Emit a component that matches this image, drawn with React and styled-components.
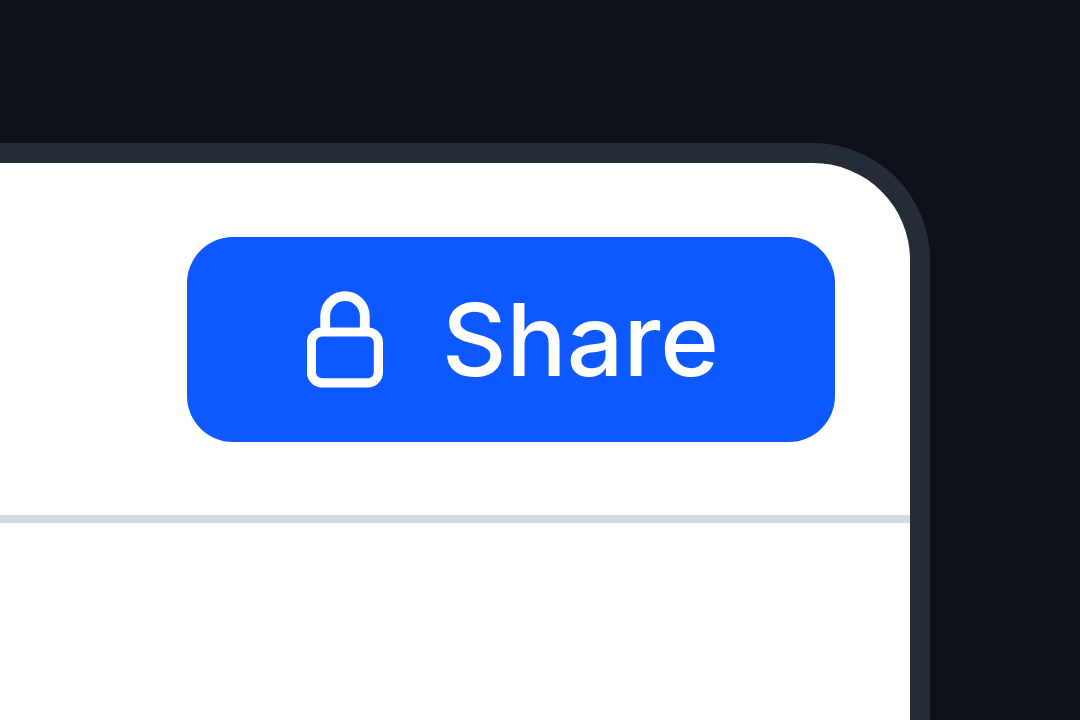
import React from 'react'
import styled, { createGlobalStyle } from 'styled-components'

const GlobalStyle = createGlobalStyle`
  * {
    box-sizing: border-box;
  }
  body {
    margin: 0;
    background: #0e1119;
  }
`

const Stage = styled.div`
  display: flex;
  min-height: 100vh;
  padding: 143px 150px 0 0;
  background: #0e1119;
  font-family: Inter, sans-serif;
`

const Panel = styled.main`
  flex: 1;
  border: solid #252c37;
  border-width: 20px 20px 0 0;
  border-top-right-radius: 117px;
  background: #fff;
  overflow: hidden;
`

const Toolbar = styled.header`
  display: flex;
  justify-content: flex-end;
  padding: 74px 75px 73px;
  border-bottom: 8px solid #d3dbe5;
`

const ShareButton = styled.button`
  display: flex;
  align-items: center;
  gap: 59px;
  height: 205px;
  padding: 0 116px 0 120px;
  border: 0;
  border-radius: 46px;
  background: #0e59ff;
  color: #fff;
  font-family: inherit;
  font-size: 100px;
  font-weight: 500;
  line-height: 120px;
  cursor: pointer;
`

const LockIcon = styled.svg`
  display: block;
  flex: none;
  width: 76px;
  height: 97px;
`

const App = () => {
  return (
    <>
      <GlobalStyle />
      <Stage>
        <Panel>
          <Toolbar>
            <ShareButton type="button">
              <LockIcon viewBox="0 0 76 97" fill="none" stroke="currentColor" aria-hidden="true">
                <rect x="4.4" y="41" width="67" height="50.8" rx="10.5" strokeWidth="9.2" />
                <path d="M18.2 41V25a19.8 19.8 0 0 1 39.6 0V41" strokeWidth="9.8" />
              </LockIcon>
              Share
            </ShareButton>
          </Toolbar>
        </Panel>
      </Stage>
    </>
  )
}

export default App
